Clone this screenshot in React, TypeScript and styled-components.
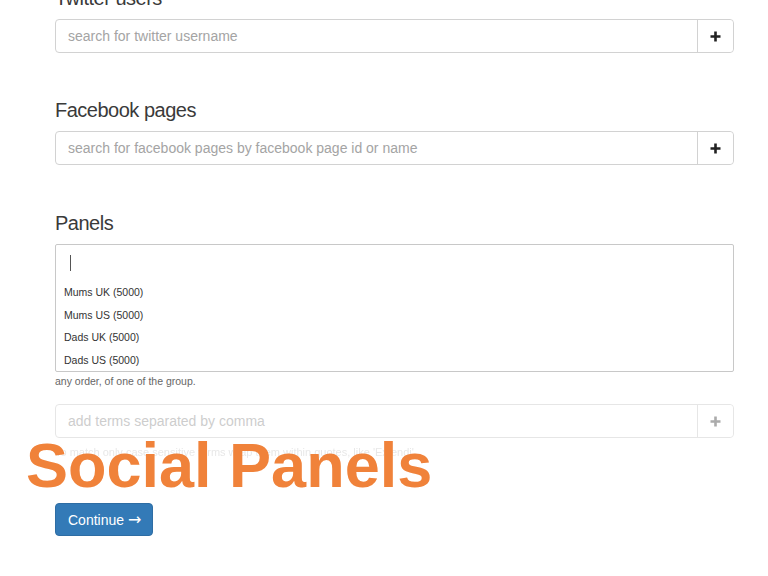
import React from "react";
import styled, { createGlobalStyle } from "styled-components";

const Global = createGlobalStyle`
  html, body { margin: 0; padding: 0; background: #fff; overflow: hidden; }
  body { font-family: "Liberation Sans", Arial, Helvetica, sans-serif; color: #333; }
  * { box-sizing: border-box; }
`;

const Page = styled.div`
  position: relative;
  width: 768px;
  height: 576px;
  overflow: hidden;
  padding: 0 34px 0 55px;
`;

const Section = styled.div<{ $gap?: number }>`
  margin-bottom: ${(p) => (p.$gap ?? 46)}px;
`;

const Heading = styled.h3<{ $first?: boolean }>`
  margin: ${(p) => (p.$first ? "-13px" : "0")} 0 10px;
  font-size: 20px;
  line-height: 22px;
  font-weight: 400;
  letter-spacing: -0.5px;
  color: #3a3a3a;
`;

const InputGroup = styled.div`
  display: flex;
  height: 34px;
  border: 1px solid #d2d2d2;
  border-radius: 4px;
  background: #fff;
`;

const TextInput = styled.input`
  flex: 1;
  border: none;
  outline: none;
  background: transparent;
  padding: 0 12px;
  font-family: "Liberation Sans", Arial, sans-serif;
  font-size: 14px;
  color: #555;
  &::placeholder { color: #a4a4a4; }
`;

const AddButton = styled.button`
  width: 36px;
  border: none;
  border-left: 1px solid #d2d2d2;
  background: #fff;
  display: flex;
  align-items: center;
  justify-content: center;
  padding: 0;
  border-radius: 0 4px 4px 0;
`;

const PanelBox = styled.div`
  border: 1px solid #c8c8c8;
  border-radius: 2px;
  height: 128px;
  display: flex;
  flex-direction: column;
  background: #fff;
`;

const SearchRow = styled.div`
  height: 36px;
  flex: none;
  padding: 10px 0 0 14px;
`;

const Caret = styled.div`
  width: 1px;
  height: 16px;
  background: #555;
`;

const Option = styled.div`
  height: 22.5px;
  line-height: 22.5px;
  padding-left: 8px;
  font-size: 10.5px;
  color: #333;
`;

const HelpText = styled.p<{ $faint?: boolean }>`
  margin: 0;
  padding-top: ${(p) => (p.$faint ? "0" : "1px")};
  font-size: ${(p) => (p.$faint ? "11px" : "10.5px")};
  line-height: 17px;
  color: ${(p) => (p.$faint ? "#d4d4d4" : "#666")};
`;

const Faded = styled.div`
  opacity: 0.55;
  margin-top: 14px;
`;

const ContinueButton = styled.button`
  margin-top: 42px;
  height: 33px;
  padding: 0 11px 0 12px;
  background: #337ab7;
  border: 1px solid #2e6da4;
  border-radius: 4px;
  color: #fff;
  font-family: "Liberation Sans", Arial, sans-serif;
  font-size: 14px;
`;

const Arrow = styled.span`
  font-family: "DejaVu Sans", sans-serif;
  font-size: 16px;
  line-height: 14px;
`;

const Overlay = styled.div`
  position: absolute;
  left: 26px;
  top: 434px;
  font-family: "Liberation Sans", Arial, sans-serif;
  font-weight: 700;
  font-size: 63px;
  line-height: 63px;
  color: #f0823a;
  white-space: nowrap;
`;

const Plus = ({ light }: { light?: boolean }) => (
  <svg width="11" height="11" viewBox="0 0 11 11">
    <path d="M5.5 0.5v10M0.5 5.5h10" stroke={light ? "#666" : "#222"} strokeWidth="2.6" />
  </svg>
);

export default function App() {
  return (
    <>
      <Global />
      <Page>
        <Section>
          <Heading $first>Twitter users</Heading>
          <InputGroup>
            <TextInput placeholder="search for twitter username" />
            <AddButton><Plus /></AddButton>
          </InputGroup>
        </Section>
        <Section $gap={47}>
          <Heading>Facebook pages</Heading>
          <InputGroup>
            <TextInput placeholder="search for facebook pages by facebook page id or name" />
            <AddButton><Plus /></AddButton>
          </InputGroup>
        </Section>
        <Section $gap={0}>
          <Heading>Panels</Heading>
          <PanelBox>
            <SearchRow><Caret /></SearchRow>
            <Option>Mums UK (5000)</Option>
            <Option>Mums US (5000)</Option>
            <Option>Dads UK (5000)</Option>
            <Option>Dads US (5000)</Option>
          </PanelBox>
          <HelpText>any order, of one of the group.</HelpText>
        </Section>
        <Faded>
          <InputGroup>
            <TextInput placeholder="add terms separated by comma" />
            <AddButton><Plus light /></AddButton>
          </InputGroup>
          <HelpText $faint style={{ marginTop: 6 }}>
            To match only case sensitive terms wrap them within quotes, like 'Extendi'.
          </HelpText>
        </Faded>
        <ContinueButton>Continue <Arrow>→</Arrow></ContinueButton>
        <Overlay>Social Panels</Overlay>
      </Page>
    </>
  );
}
